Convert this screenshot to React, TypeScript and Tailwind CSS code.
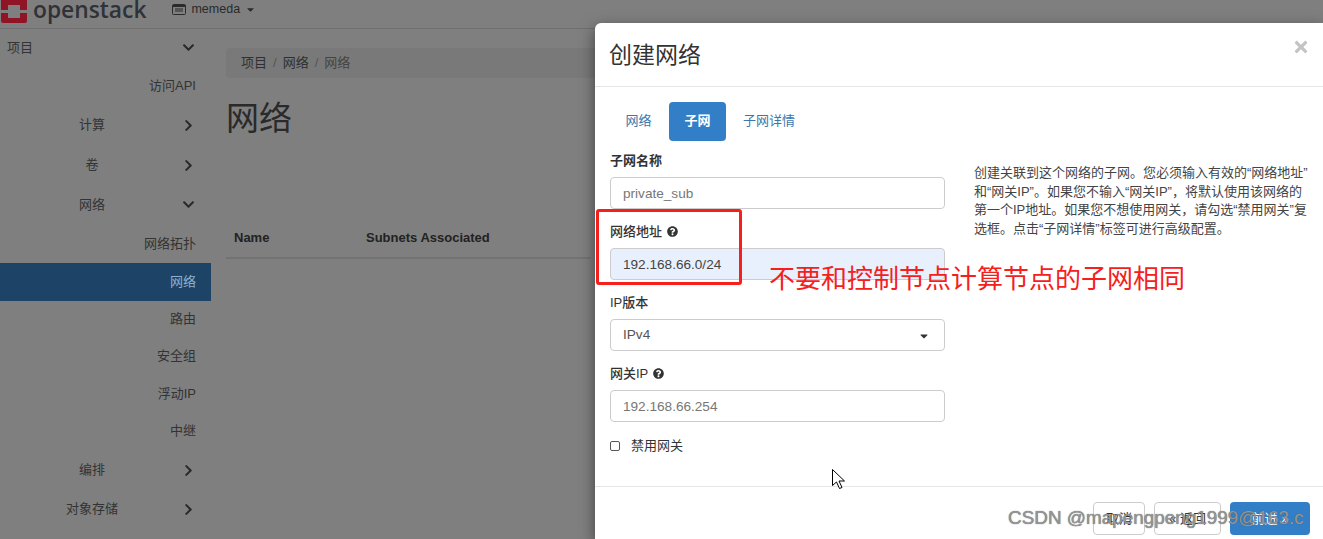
import { FaChevronDown, FaChevronRight, FaQuestionCircle, FaCaretDown, FaTimes } from 'react-icons/fa'

const font = "font-['Liberation_Sans','Noto_Sans_CJK_SC',sans-serif]"

const navItems = [
  { label: '项目', arrow: 'down', top: true, h: 'h-[39px]' },
  { label: '访问API', h: 'h-[38px]' },
  { label: '计算', arrow: 'right', group: true, h: 'h-[40px]' },
  { label: '卷', arrow: 'right', group: true, h: 'h-[40px]' },
  { label: '网络', arrow: 'down', group: true, h: 'h-[39px]' },
  { label: '网络拓扑', h: 'h-[39px]' },
  { label: '网络', active: true, h: 'h-[38px]' },
  { label: '路由', h: 'h-[35px]' },
  { label: '安全组', h: 'h-[40px]' },
  { label: '浮动IP', h: 'h-[35px]' },
  { label: '中继', h: 'h-[40px]' },
  { label: '编排', arrow: 'right', group: true, h: 'h-[38px]' },
  { label: '对象存储', arrow: 'right', group: true, h: 'h-[40px]' },
]

function Sidebar() {
  return (
    <aside className="w-[211px] shrink-0 pt-[28px]">
      <nav className="flex flex-col">
        {navItems.map((item, idx) => {
          if (item.top) {
            return (
              <div key={idx} className={`${item.h} flex items-center justify-between pl-[7px] pr-[16px] text-[13px] text-[#333]`}>
                <span>{item.label}</span>
                <FaChevronDown size={13} className="text-[#2a2a2a]" />
              </div>
            )
          }
          if (item.group) {
            return (
              <div key={idx} className={`${item.h} flex items-center justify-end pr-[16px] text-[13px] text-[#333]`}>
                <span className="w-[52px] text-center mr-[64px]">{item.label}</span>
                {item.arrow === 'down'
                  ? <FaChevronDown size={13} className="text-[#2a2a2a]" />
                  : <FaChevronRight size={13} className="text-[#2a2a2a]" />}
              </div>
            )
          }
          return (
            <div
              key={idx}
              className={`${item.h} flex items-center justify-end pr-[15px] text-[13px] ${item.active ? 'bg-[#1d4466] text-[#8fb0cc]' : 'text-[#333]'}`}
            >
              {item.label}
            </div>
          )
        })}
      </nav>
    </aside>
  )
}

function Field({ label, help, value, filled, muted, bold }: { label: string; help?: boolean; value: string; filled?: boolean; muted?: boolean; bold?: boolean }) {
  return (
    <div>
      <label className={`flex items-center gap-[5px] h-[19px] text-[13px] text-[#333] ${bold ? 'font-bold' : 'font-medium'}`}>
        {label}
        {help && <FaQuestionCircle size={11} className="text-[#333]" />}
      </label>
      <div className={`mt-[7px] h-[32px] rounded-[4px] border border-[#ccc] px-[12px] pt-[2px] flex items-center text-[13.6px] ${filled ? 'bg-[#e8f0fe] text-[#444]' : 'bg-white'} ${muted ? 'text-[#777]' : ''}`}>
        {value}
      </div>
    </div>
  )
}

function Modal() {
  return (
    <div className="absolute left-[595px] top-[23px] right-0 bottom-0 bg-white rounded-tl-[6px] flex flex-col overflow-hidden shadow-[0_5px_15px_rgba(0,0,0,0.5)]">
      <div className="h-[64px] shrink-0 border-b border-[#e5e5e5] flex items-center justify-between pl-[14px] pr-[13px]">
        <h1 className="text-[23px] text-[#333] leading-none mt-[2px]">创建网络</h1>
        <FaTimes size={18} className="text-[#c4c4c4] mb-[16px]" />
      </div>

      <div className="h-[400px] shrink-0 border-b border-[#e5e5e5] px-[15px] pt-[15px]">
        <div className="flex text-[13px]">
          <div className="h-[39px] w-[57px] pb-[2px] flex items-center justify-center text-[#3a78ab]">网络</div>
          <div className="h-[39px] w-[57px] ml-[2px] pb-[2px] flex items-center justify-center rounded-[4px] bg-[#337fc7] text-white font-bold">子网</div>
          <div className="h-[39px] w-[86px] pb-[2px] flex items-center justify-center text-[#3a78ab]">子网详情</div>
        </div>
        <div className="flex">
          <div className="w-[335px] shrink-0">
            <div className="mt-[10px] flex flex-col gap-[13px]">
              <Field label="子网名称" value="private_sub" muted bold />
              <Field label="网络地址" help value="192.168.66.0/24" filled />
              <div>
                <label className="flex items-center h-[19px] text-[13px] font-medium text-[#333]">IP版本</label>
                <div className="mt-[7px] h-[32px] rounded-[4px] border border-[#ccc] pl-[12px] pr-[14px] pt-[1px] flex items-center justify-between text-[13.6px] text-[#555]">
                  IPv4
                  <FaCaretDown size={12} className="text-[#333]" />
                </div>
              </div>
              <Field label="网关IP" help value="192.168.66.254" muted />
            </div>
            <div className="mt-[14px] flex items-center gap-[11px] text-[13px] text-[#333]">
              <span className="w-[10px] h-[10px] rounded-[2px] border border-[#555] bg-white" />
              禁用网关
            </div>
          </div>
          <p className="ml-[29px] mt-[23px] w-[336px] shrink-0 text-[13px] leading-[18.6px] text-[#444] whitespace-nowrap">
            创建关联到这个网络的子网。您必须输入有效的“网络地址”<br />
            和“网关IP”。如果您不输入“网关IP”，将默认使用该网络的<br />
            第一个IP地址。如果您不想使用网关，请勾选“禁用网关”复<br />
            选框。点击“子网详情”标签可进行高级配置。
          </p>
        </div>
      </div>

      <div className="flex justify-end gap-[9px] pr-[13px] pt-[15px] text-[13px] text-[#333]">
        <div className="w-[52px] h-[33px] rounded-[4px] border border-[#ccc] flex items-center justify-center">取消</div>
        <div className="w-[67px] h-[33px] rounded-[4px] border border-[#ccc] flex items-center justify-center">« 返回</div>
        <div className="w-[80px] h-[33px] rounded-[4px] bg-[#337fc7] text-white flex items-center justify-center">前进 »</div>
      </div>
    </div>
  )
}

export default function App() {
  return (
    <div className={`${font} relative w-[1323px] h-[539px] overflow-hidden bg-[#7f7f7f]`}>
      <header className="absolute inset-x-0 top-0 h-[29px] border-b border-[#6f6f6f] flex items-start">
        <svg width="28" height="23" viewBox="0 0 28 23" className="shrink-0">
          <path
            fillRule="evenodd"
            d="M1 0h26v10h-7V5H8v5H1zM1 13h7v5h12v-5h7v8a2 2 0 0 1-2 2H3a2 2 0 0 1-2-2z"
            fill="#8f1526"
          />
        </svg>
        <span className="ml-[5px] -mt-[5px] text-[22.8px] leading-[30px] font-semibold text-[#2f3238] font-['Open_Sans',sans-serif]">openstack</span>
        <span className="ml-[26px] mt-[1px] flex items-center gap-[5px] text-[12.5px] leading-[16px] text-[#2a2a2a]">
          <svg width="14" height="11" viewBox="0 0 14 11" fill="none" stroke="#2a2a2a">
            <rect x="0.5" y="0.5" width="13" height="10" rx="1" />
            <path d="M1 2h12" strokeWidth="2" />
            <path d="M3 5h8M3 7h8" />
          </svg>
          memeda
          <FaCaretDown size={11} />
        </span>
      </header>

      <div className="flex">
        <Sidebar />
        <main className="flex-1 pl-[15px] pt-[48px] text-[#2a2a2a]">
          <div className="h-[30px] rounded-l-[4px] bg-[#797979] pl-[15px] flex items-center gap-[6px] text-[13px] text-[#303030]">
            <span>项目</span><span className="text-[#555]">/</span>
            <span>网络</span><span className="text-[#555]">/</span>
            <span className="text-[#444]">网络</span>
          </div>
          <h2 className="mt-[21px] text-[33px] leading-[40px] text-[#2a2a2a]">网络</h2>
          <div className="mt-[79px] h-[41px] w-[365px] border-b-2 border-[#737373] flex items-center text-[13px] font-bold text-[#222]">
            <span className="ml-[8px] w-[132px]">Name</span>
            <span>Subnets Associated</span>
          </div>
        </main>
      </div>

      <Modal />

      {/* 红框标注 */}
      <div className="absolute left-[596px] top-[209px] w-[146px] h-[76px] border-[3px] border-[#f5201c] rounded-[3px]" />
      <div className="absolute left-[769px] top-[263px] text-[26px] leading-[32px] text-[#f5201c] whitespace-nowrap">不要和控制节点计算节点的子网相同</div>

      <svg width="14" height="20" viewBox="0 0 14 20" className="absolute left-[832px] top-[469px]">
        <path d="M.5.5v16l4-3.5 3 6.5 2.5-1-3-6.5h5.5z" fill="#fff" stroke="#000" strokeWidth="1" strokeLinejoin="round" />
      </svg>

      <div className="absolute left-[1008px] top-[507px] text-[18.9px] leading-[22px] text-[#959595] whitespace-nowrap [text-shadow:0_0_1px_#555]">CSDN @mapengpeng1999@163.c</div>
    </div>
  )
}
